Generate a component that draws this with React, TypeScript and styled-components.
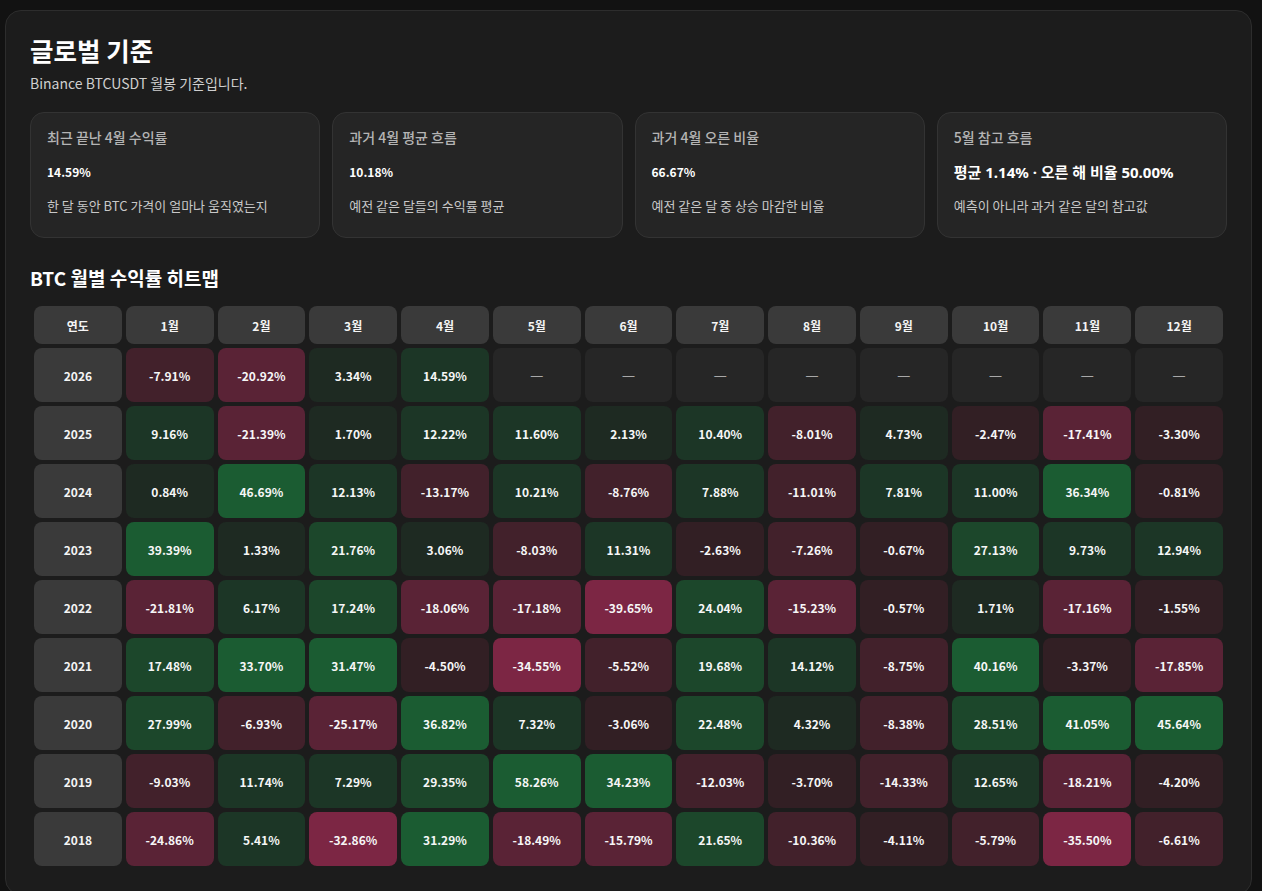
import React from "react";
import styled, { createGlobalStyle } from "styled-components";

const GlobalStyle = createGlobalStyle`
  html, body {
    margin: 0;
    padding: 0;
    background: #121212;
    color: #f2f2f2;
    font-family: "Noto Sans CJK KR", "Noto Sans", sans-serif;
  }
  * { box-sizing: border-box; }
`;

const Page = styled.div`
  padding: 10px 10px 0 5px;
`;

const Panel = styled.section`
  background: #1c1c1c;
  border: 1px solid #2d2d2d;
  border-radius: 16px;
  padding: 24px 24px 24px;
`;

const Title = styled.h1`
  margin: 0;
  font-size: 25.5px;
  line-height: 30px;
  font-weight: 700;
  color: #ffffff;
`;

const Subtitle = styled.p`
  margin: 8px 0 0;
  font-size: 14px;
  line-height: 20px;
  color: #cfcfcf;
`;

const Cards = styled.div`
  margin-top: 19px;
  display: grid;
  grid-template-columns: repeat(4, 1fr);
  gap: 12px;
`;

const Card = styled.div`
  height: 126px;
  background: #252525;
  border: 1px solid #333333;
  border-radius: 14px;
  padding: 14px 16px 0;
  display: flex;
  flex-direction: column;
`;

const CardLabel = styled.div`
  font-size: 14px;
  line-height: 20px;
  font-weight: 500;
  color: #b4b4b4;
`;

const CardValue = styled.div<{ $large?: boolean }>`
  margin-top: 16px;
  font-family: ${(p) =>
    p.$large ? `"Noto Sans", "Noto Sans CJK KR", sans-serif` : "inherit"};
  font-size: ${(p) => (p.$large ? "15px" : "12px")};
  line-height: 18px;
  font-weight: 700;
  color: #ffffff;
`;

const CardDesc = styled.div`
  margin-top: 16px;
  font-size: 13px;
  line-height: 18px;
  color: #c8c8c8;
`;

const SectionTitle = styled.h2`
  margin: 27px 0 0;
  font-size: 19px;
  line-height: 25px;
  font-weight: 700;
  color: #ffffff;
`;

const Grid = styled.div`
  margin-top: 12px;
  display: grid;
  grid-template-columns: repeat(13, 1fr);
  gap: 4px;
  padding: 4px;
`;

const HeadCell = styled.div`
  height: 38px;
  border-radius: 8px;
  background: #3a3a3a;
  display: flex;
  align-items: center;
  justify-content: center;
  font-size: 12px;
  font-weight: 700;
  color: #f4f4f4;
`;

const YearCell = styled.div`
  height: 54px;
  border-radius: 8px;
  background: #3a3a3a;
  display: flex;
  align-items: center;
  justify-content: center;
  font-size: 12px;
  font-weight: 700;
  color: #f4f4f4;
`;

const ValueCell = styled.div<{ $bg: string }>`
  height: 54px;
  border-radius: 8px;
  background: ${(p) => p.$bg};
  display: flex;
  align-items: center;
  justify-content: center;
  font-size: 12px;
  font-weight: 700;
  color: #f6f6f6;
`;

const EmptyCell = styled.div`
  height: 54px;
  border-radius: 8px;
  background: #262626;
  display: flex;
  align-items: center;
  justify-content: center;
  font-family: "Noto Sans", sans-serif;
  font-size: 13px;
  color: #a8a8a8;
`;

const GREEN = ["#1e2a22", "#1c3626", "#1c472b", "#1b5c32"];
const RED = ["#321f24", "#42212b", "#5a2336", "#7c2644"];

function cellColor(v: number): string {
  const a = Math.abs(v);
  const idx = a < 5 ? 0 : a < 15 ? 1 : a < 30 ? 2 : 3;
  return v >= 0 ? GREEN[idx] : RED[idx];
}

const rows: { year: number; values: (number | null)[] }[] = [
  { year: 2026, values: [-7.91, -20.92, 3.34, 14.59, null, null, null, null, null, null, null, null] },
  { year: 2025, values: [9.16, -21.39, 1.7, 12.22, 11.6, 2.13, 10.4, -8.01, 4.73, -2.47, -17.41, -3.3] },
  { year: 2024, values: [0.84, 46.69, 12.13, -13.17, 10.21, -8.76, 7.88, -11.01, 7.81, 11.0, 36.34, -0.81] },
  { year: 2023, values: [39.39, 1.33, 21.76, 3.06, -8.03, 11.31, -2.63, -7.26, -0.67, 27.13, 9.73, 12.94] },
  { year: 2022, values: [-21.81, 6.17, 17.24, -18.06, -17.18, -39.65, 24.04, -15.23, -0.57, 1.71, -17.16, -1.55] },
  { year: 2021, values: [17.48, 33.7, 31.47, -4.5, -34.55, -5.52, 19.68, 14.12, -8.75, 40.16, -3.37, -17.85] },
  { year: 2020, values: [27.99, -6.93, -25.17, 36.82, 7.32, -3.06, 22.48, 4.32, -8.38, 28.51, 41.05, 45.64] },
  { year: 2019, values: [-9.03, 11.74, 7.29, 29.35, 58.26, 34.23, -12.03, -3.7, -14.33, 12.65, -18.21, -4.2] },
  { year: 2018, values: [-24.86, 5.41, -32.86, 31.29, -18.49, -15.79, 21.65, -10.36, -4.11, -5.79, -35.5, -6.61] },
];

const cards = [
  { label: "최근 끝난 4월 수익률", value: "14.59%", desc: "한 달 동안 BTC 가격이 얼마나 움직였는지" },
  { label: "과거 4월 평균 흐름", value: "10.18%", desc: "예전 같은 달들의 수익률 평균" },
  { label: "과거 4월 오른 비율", value: "66.67%", desc: "예전 같은 달 중 상승 마감한 비율" },
  { label: "5월 참고 흐름", value: "평균 1.14% · 오른 해 비율 50.00%", desc: "예측이 아니라 과거 같은 달의 참고값", large: true },
];

export default function App() {
  return (
    <>
      <GlobalStyle />
      <Page>
        <Panel>
          <Title>글로벌 기준</Title>
          <Subtitle>Binance BTCUSDT 월봉 기준입니다.</Subtitle>
          <Cards>
            {cards.map((c) => (
              <Card key={c.label}>
                <CardLabel>{c.label}</CardLabel>
                <CardValue $large={c.large}>{c.value}</CardValue>
                <CardDesc>{c.desc}</CardDesc>
              </Card>
            ))}
          </Cards>
          <SectionTitle>BTC 월별 수익률 히트맵</SectionTitle>
          <Grid>
            <HeadCell>연도</HeadCell>
            {Array.from({ length: 12 }, (_, i) => (
              <HeadCell key={i}>{i + 1}월</HeadCell>
            ))}
            {rows.map((r) => (
              <React.Fragment key={r.year}>
                <YearCell>{r.year}</YearCell>
                {r.values.map((v, i) =>
                  v === null ? (
                    <EmptyCell key={i}>—</EmptyCell>
                  ) : (
                    <ValueCell key={i} $bg={cellColor(v)}>
                      {v.toFixed(2)}%
                    </ValueCell>
                  )
                )}
              </React.Fragment>
            ))}
          </Grid>
        </Panel>
      </Page>
    </>
  );
}
